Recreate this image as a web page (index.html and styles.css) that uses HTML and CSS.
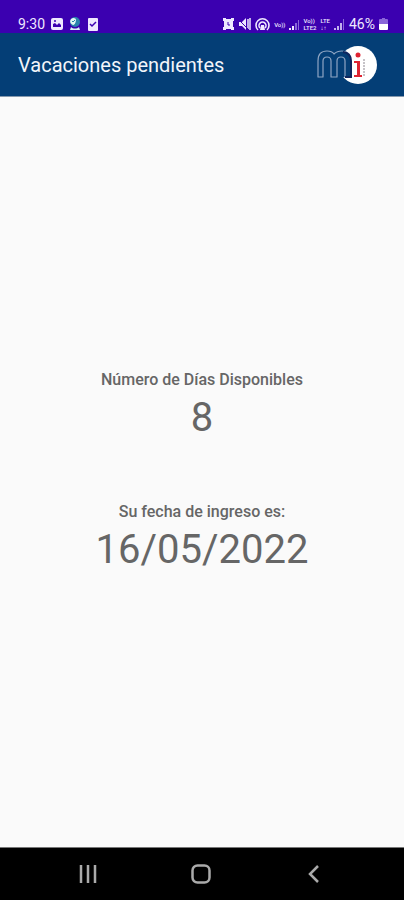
FILE: index.html
```html
<!DOCTYPE html>
<html lang="es">
<head>
    <meta charset="UTF-8">
    <meta name="viewport" content="width=device-width, initial-scale=1.0">
    <title>Vacaciones pendientes</title>
    <link rel="stylesheet" href="styles.css">
</head>
<body>
    <!-- Barra de estado -->
    <div class="status-bar">
        <div class="status-left">
            <span>9:30</span>
            <svg width="12" height="12" viewBox="0 0 12 12">
                <rect width="12" height="12" rx="2" fill="#eee8ff"/>
                <path d="M2 9V6l2-1 2 2 2-2 2 2v2z" fill="#3b00b0"/>
                <circle cx="4" cy="3" r="1" fill="#3b00b0"/>
            </svg>
            <svg width="12" height="14" viewBox="0 0 12 14">
                <circle cx="6" cy="5" r="5" fill="#2a83ac"/>
                <path d="M2 2c2-2 5-1 5 1 0 3-2 5-3 5-2-1-4-3-2-6z" fill="#e4f8f4"/>
                <path d="M3 4l1 1 2-2" fill="none" stroke="#2a83ac"/>
                <path d="M2 10c2 2 6 2 8 0l1 3H1z" fill="#d9f2f4"/>
            </svg>
            <svg width="12" height="13" viewBox="0 0 12 13">
                <rect x="1" width="10" height="13" rx="1" fill="#eee8ff"/>
                <path d="M3 6l2 2 4-4" fill="none" stroke="#3b00b0" stroke-width="1.5"/>
            </svg>
        </div>
        <div class="status-right">
            <svg width="11" height="12" viewBox="0 0 11 12">
                <path d="M0 0h3v1h5V0h3v3h-1v6h1v3H8v-1H3v1H0V9h1V3H0z" fill="#eee8ff"/>
                <path d="M5 4v3h2" fill="none" stroke="#3b00b0"/>
            </svg>
            <svg width="13" height="12" viewBox="0 0 13 12">
                <path d="M1 4h3l4-4v12L4 8H1z" fill="#eee8ff"/>
                <path d="M10 1v10M12 0v12" stroke="#eee8ff" stroke-width="1.5"/>
                <path d="M0 1l10 10" stroke="#3b00b0"/>
            </svg>
            <svg width="15" height="13" viewBox="0 0 15 13">
                <g fill="none" stroke="#eee8ff" stroke-width="1.6">
                    <path d="M3 12a6.5 6.5 0 1 1 9 0"/>
                    <path d="M5 10a3.5 3.5 0 1 1 5 0"/>
                </g>
                <path d="M6 7h3l1 5H5z" fill="#eee8ff"/>
            </svg>
            <span class="network">Vo))</span>
            <svg width="10" height="11" viewBox="0 0 10 11">
                <path d="M0 9h2v2H0zM3 7h2v4H3z" fill="#eee8ff"/>
                <path d="M6 4h2v7H6zM9 1h1v10H9z" fill="#8a66d8"/>
            </svg>
            <span class="network">Vo))<br>LTE2</span>
            <span class="network">LTE<br>↓↑</span>
            <svg width="11" height="11" viewBox="0 0 11 11">
                <path d="M0 9h2v2H0zM3 7h2v4H3zM6 4h2v7H6z" fill="#c3b0ee"/>
                <path d="M9 0h1v11H9z" fill="#8a66d8"/>
            </svg>
            <span>46%</span>
            <svg width="9" height="12" viewBox="0 0 9 12">
                <path d="M3 0h3v1h2q1 0 1 1v4H0V2q0-1 1-1h2z" fill="#8a66d8"/>
                <path d="M0 6h9v5q0 1-1 1H1q-1 0-1-1z" fill="#fff"/>
            </svg>
        </div>
    </div>

    <!-- Encabezado -->
    <header class="app-bar">
        <h1 class="title">Vacaciones pendientes</h1>
        <svg class="logo" width="62" height="40" viewBox="0 0 62 40" role="img" aria-label="mi">
            <circle cx="42" cy="20" r="19" fill="#fff"/>
            <path d="M18 6h8q9 0 9 10v16H18z" fill="#043e76"/>
            <path d="M2 32V16Q2 6 11 6q5 0 7 3 3-3 8-3 9 0 9 10v16h-6V16q0-4-4-4t-4 4v16h-6V16q0-4-4-4t-4 4v16z" fill="#043e76" stroke="#8fa5c3" stroke-width="1.2" stroke-linejoin="round"/>
            <path d="M27 7q8 1 8 9v16h-6" fill="none" stroke="#10265e" stroke-width="2"/>
            <circle cx="42" cy="10" r="2.5" fill="#df2432"/>
            <path d="M38 16h6v14h2v2h-8v-2h3V18h-3z" fill="#df2432"/>
            <path d="M48 14v18" stroke="#8d8790" stroke-dasharray="2 1"/>
        </svg>
    </header>

    <!-- Datos de vacaciones -->
    <main class="content">
        <section class="item">
            <h2 class="label">Número de Días Disponibles</h2>
            <p class="value">8</p>
        </section>
        <section class="item">
            <h2 class="label">Su fecha de ingreso es:</h2>
            <p class="value">16/05/2022</p>
        </section>
    </main>

    <!-- Navegación del sistema -->
    <nav class="nav-bar">
        <button class="nav-button" aria-label="Recientes">
            <svg width="20" height="20" viewBox="0 0 20 20">
                <path d="M3 1v18M10 1v18M17 1v18" stroke="#aaa" stroke-width="2.5"/>
            </svg>
        </button>
        <button class="nav-button" aria-label="Inicio">
            <svg width="20" height="20" viewBox="0 0 20 20">
                <rect x="1.5" y="1.5" width="17" height="17" rx="5" fill="none" stroke="#aaa" stroke-width="2.5"/>
            </svg>
        </button>
        <button class="nav-button" aria-label="Atrás">
            <svg width="20" height="20" viewBox="0 0 20 20">
                <path d="M14 2l-8 8 8 8" fill="none" stroke="#aaa" stroke-width="2.5"/>
            </svg>
        </button>
    </nav>
</body>
</html>
```
FILE: styles.css
```css
body {
    font-family: Roboto, 'Liberation Sans', sans-serif;
    background-color: #fafafa;
    color: #666;
    margin: 0;
    display: flex;
    flex-direction: column;
    min-height: 100vh;
}

svg {
    display: block;
    flex-shrink: 0;
}

.status-bar {
    display: flex;
    justify-content: space-between;
    background-color: #3b00b0;
    color: #eee8ff;
    font-size: 14px;
    line-height: 16px;
    padding: 16px 16px 1px 18px;
}

.status-left,
.status-right {
    display: flex;
    align-items: center;
}

.status-left {
    gap: 6px;
}

.status-right {
    gap: 4px;
}

.network {
    font-size: 6px;
    font-weight: 500;
    line-height: 7px;
}

.app-bar {
    display: flex;
    justify-content: space-between;
    align-items: center;
    height: 62px;
    padding: 1px 26px 0 18px;
    background-color: #043e76;
    border-bottom: 1px solid #8598ad;
}

.title {
    margin: 0;
    color: #f2f5fa;
    font-size: 20px;
    font-weight: 400;
}

.content {
    flex: 1;
    display: flex;
    flex-direction: column;
    justify-content: center;
    gap: 58px;
    padding-top: 2px;
    text-align: center;
}

.label {
    margin: 0;
    font-size: 16px;
    font-weight: 500;
    line-height: 20px;
}

.value {
    margin: 0;
    font-size: 40px;
    line-height: 52px;
    padding-top: 2px;
}

.nav-bar {
    display: flex;
    justify-content: space-around;
    padding: 0 34px 0 32px;
    background-color: #000;
    border-top: 1px solid #777;
}

.nav-button {
    display: flex;
    align-items: center;
    height: 52px;
    padding: 0 16px;
    background: none;
    border: none;
    cursor: pointer;
}
```
